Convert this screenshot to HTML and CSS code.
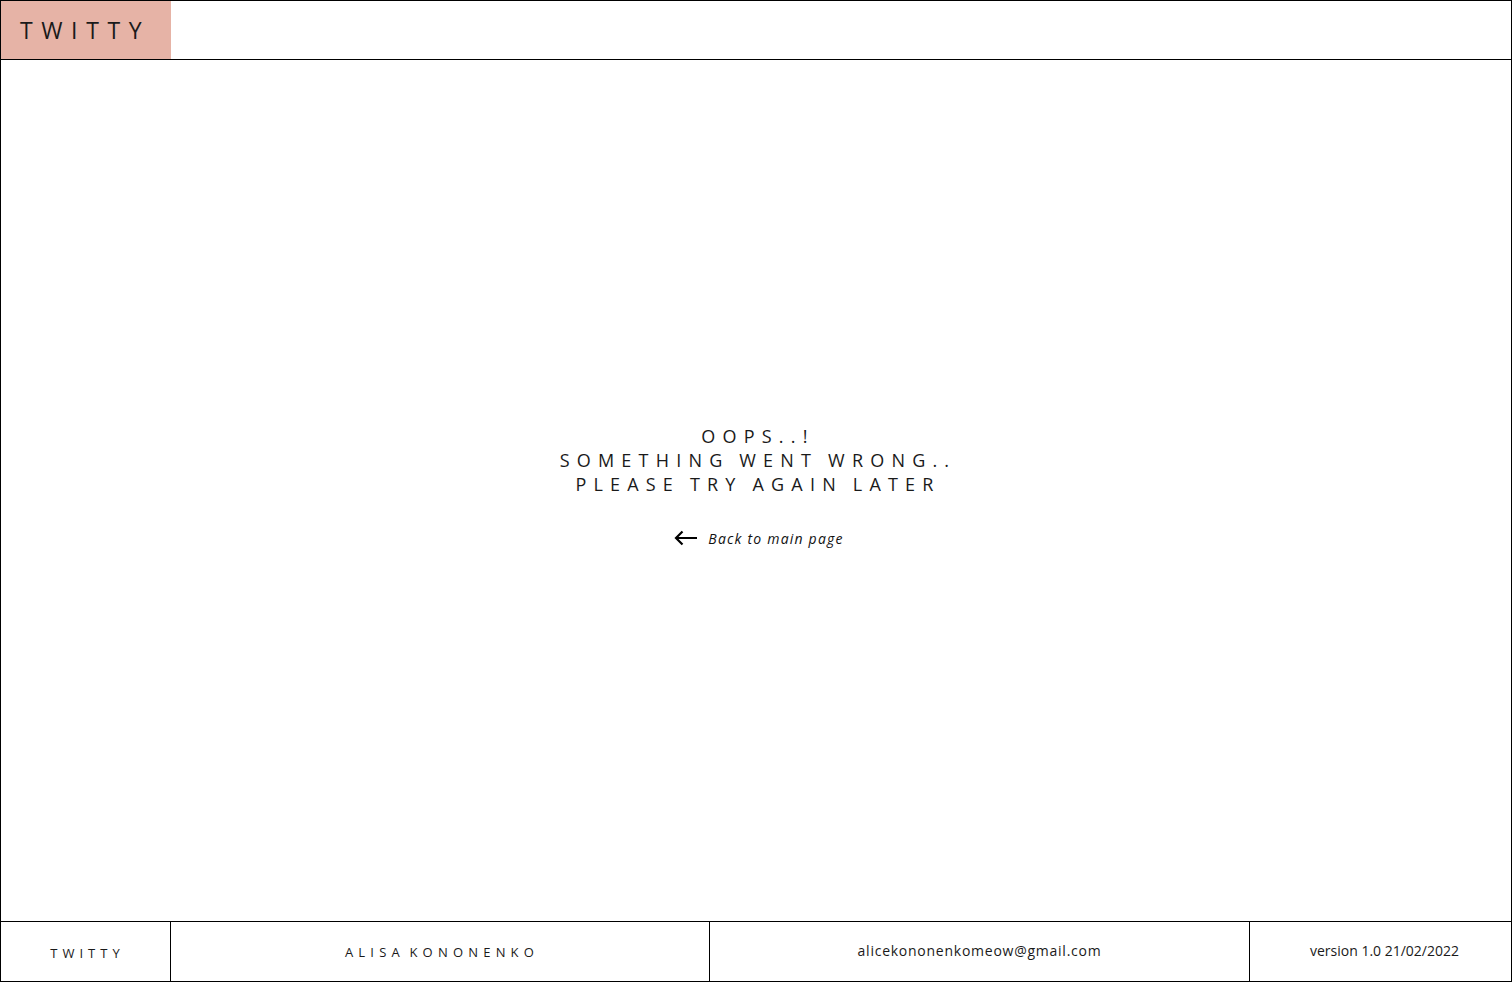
FILE: index.html
```html
<!DOCTYPE html>
<html lang="en">
<head>
<meta charset="utf-8">
<title>Twitty</title>
<link rel="stylesheet" href="styles.css">
</head>
<body>
<div class="page">
  <header class="header">
    <div class="logo">TWITTY</div>
  </header>
  <main class="main">
    <div class="message">
      <p class="error">OOPS..!<br>SOMETHING WENT WRONG..<br>PLEASE TRY AGAIN LATER</p>
      <a class="back" href="#">
        <svg class="arrow" width="24" height="16" viewBox="0 0 24 16" aria-hidden="true">
          <path d="M23 8H2M8.5 1.5L2 8l6.5 6.5" fill="none" stroke="#000" stroke-width="2.2"/>
        </svg>
        <span>Back to main page</span>
      </a>
    </div>
  </main>
  <footer class="footer">
    <div class="fcell f-logo">TWITTY</div>
    <div class="fcell f-name">ALISA KONONENKO</div>
    <div class="fcell f-mail">alicekononenkomeow@gmail.com</div>
    <div class="fcell f-ver">version 1.0 21/02/2022</div>
  </footer>
</div>
</body>
</html>
```

FILE: styles.css
```css
* { box-sizing: border-box; }
html, body { margin: 0; padding: 0; background: #fff; }
body { font-family: "Open Sans", "DejaVu Sans", sans-serif; color: #1a1a1a; }

.page {
  width: 1512px;
  height: 982px;
  border: 1px solid #000;
  display: flex;
  flex-direction: column;
}

.header {
  height: 59px;
  border-bottom: 1px solid #000;
  display: flex;
  flex: none;
}

.logo {
  width: 170px;
  background: #e6b3a6;
  display: flex;
  align-items: center;
  padding-left: 19px;
  font-size: 23px;
  font-weight: 400;
  letter-spacing: 8.6px;
  color: #1a1a1a;
}

.main {
  flex: 1;
  display: flex;
  align-items: center;
  justify-content: center;
}

.message {
  display: flex;
  flex-direction: column;
  align-items: center;
  margin-top: -10px;
  margin-left: 4px;
}

.error {
  margin: 0;
  text-align: center;
  font-size: 18px;
  font-weight: 400;
  line-height: 24px;
  letter-spacing: 7.2px;
  word-spacing: -2px;
  color: #1a1a1a;
}

.back {
  margin-top: 33px;
  display: flex;
  align-items: center;
  gap: 10px;
  color: #111;
  text-decoration: none;
  font-style: italic;
  font-size: 14px;
  letter-spacing: 1.2px;
  margin-left: 2px;
}

.arrow { display: block; }

.footer {
  height: 60px;
  border-top: 1px solid #000;
  display: flex;
  flex: none;
}

.fcell {
  display: flex;
  align-items: center;
  justify-content: center;
  font-size: 14px;
  font-weight: 400;
  color: #1a1a1a;
}

.f-logo {
  width: 170px;
  border-right: 1px solid #000;
  font-size: 13px;
  letter-spacing: 5px;
  padding-top: 3px;
  padding-left: 4px;
}

.f-name {
  width: 539px;
  border-right: 1px solid #000;
  font-size: 13px;
  letter-spacing: 5.2px;
  word-spacing: -4px;
  padding-top: 1px;
  padding-left: 4px;
}

.f-mail {
  width: 540px;
  border-right: 1px solid #000;
  letter-spacing: 0.75px;
  padding-bottom: 3px;
}

.f-ver {
  flex: 1;
  padding-bottom: 3px;
  padding-left: 8px;
}
```
